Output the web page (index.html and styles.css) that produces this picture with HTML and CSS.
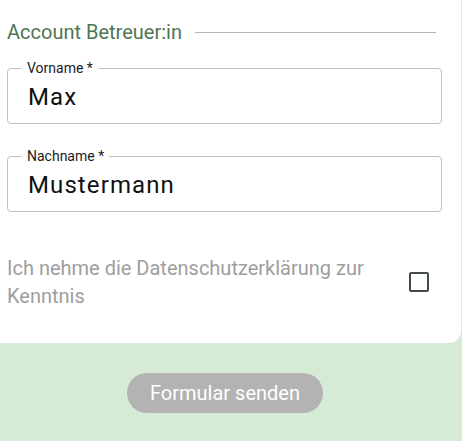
FILE: index.html
```html
<!DOCTYPE html>
<html lang="de">
<head>
<meta charset="utf-8">
<title>Formular</title>
<link rel="stylesheet" href="styles.css">
</head>
<body>
<div class="page">
  <form class="card">
    <div class="section-title">
      <span class="section-label">Account Betreuer:in</span>
      <span class="section-line"></span>
    </div>
    <fieldset class="field">
      <legend class="field-label">Vorname *</legend>
      <div class="field-value">Max</div>
    </fieldset>
    <fieldset class="field">
      <legend class="field-label">Nachname *</legend>
      <div class="field-value">Mustermann</div>
    </fieldset>
    <div class="consent">
      <span class="consent-text">Ich nehme die Datenschutzerklärung zur Kenntnis</span>
      <span class="checkbox"></span>
    </div>
  </form>
  <div class="actions">
    <button class="submit" type="button">Formular senden</button>
  </div>
</div>
</body>
</html>
```
FILE: styles.css
```css
html, body {
  margin: 0;
  padding: 0;
}
body {
  font-family: Roboto, "Liberation Sans", sans-serif;
  background: #d6ebd6;
}
.page {
  min-height: 441px;
  background: #d6ebd6;
}
.card {
  background: #ffffff;
  border-bottom-right-radius: 12px;
  padding: 20px 19px 0 7px;
  height: 323px;
  margin-right: 1px;
}
.section-title {
  display: flex;
  align-items: center;
  gap: 13px;
  height: 24px;
  padding-right: 6px;
}
.section-label {
  font-size: 20px;
  line-height: 24px;
  color: #4e7653;
  white-space: nowrap;
}
.section-line {
  flex: 1;
  height: 1px;
  background: #b5b5b5;
}
.field {
  margin: 16px 0 0 0;
  border: 1px solid #bfbfbf;
  border-radius: 4px;
  padding: 7px 14px 12px 14px;
  min-width: 0;
}
.field + .field {
  margin-top: 24px;
}
.field-label {
  font-size: 14px;
  line-height: 16px;
  color: #1c1c1c;
  padding: 0 5px;
  margin-left: 0;
}
.field-value {
  font-size: 24px;
  line-height: 28px;
  color: #111111;
  letter-spacing: 1.1px;
  margin-left: 6px;
}
.consent {
  display: flex;
  align-items: center;
  justify-content: space-between;
  margin-top: 42px;
  padding-right: 13px;
}
.consent-text {
  font-size: 20px;
  line-height: 28px;
  color: #9e9e9e;
  max-width: 380px;
}
.checkbox {
  width: 20px;
  height: 20px;
  box-sizing: border-box;
  border: 2px solid #444d44;
  border-radius: 2px;
  flex: none;
}
.actions {
  display: flex;
  justify-content: center;
  padding: 30px 12px 0 0;
}
.submit {
  width: 196px;
  height: 40px;
  border: none;
  border-radius: 20px;
  background: #b3b3b3;
  color: #ffffff;
  font-family: Roboto, "Liberation Sans", sans-serif;
  font-size: 20px;
  padding: 0;
}
```
